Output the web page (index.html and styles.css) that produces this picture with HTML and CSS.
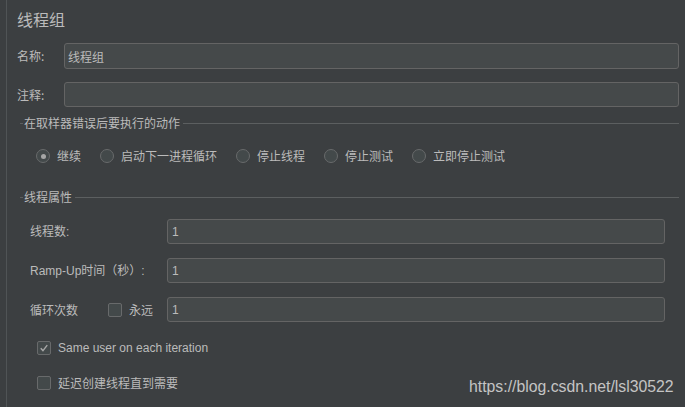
FILE: index.html
```html
<!DOCTYPE html>
<html lang="zh">
<head>
<meta charset="utf-8">
<link rel="stylesheet" href="styles.css">
</head>
<body>
<div class="frame">
  <div class="title">线程组</div>
  <div class="form-row first">
    <label class="label">名称:</label>
    <div class="input">线程组</div>
  </div>
  <div class="form-row second">
    <label class="label">注释:</label>
    <div class="input"></div>
  </div>

  <div class="group-head">
    <span class="seg"></span><span class="legend">在取样器错误后要执行的动作</span><span class="rule"></span>
  </div>
  <div class="radio-row">
    <span class="radio on"></span><span class="rlabel">继续</span>
    <span class="radio"></span><span class="rlabel">启动下一进程循环</span>
    <span class="radio"></span><span class="rlabel">停止线程</span>
    <span class="radio"></span><span class="rlabel">停止测试</span>
    <span class="radio"></span><span class="rlabel">立即停止测试</span>
  </div>

  <div class="group-head g2">
    <span class="seg"></span><span class="legend">线程属性</span><span class="rule"></span>
  </div>
  <div class="prop-row">
    <span class="plabel">线程数:</span>
    <div class="input small">1</div>
  </div>
  <div class="prop-row">
    <span class="plabel">Ramp-Up时间（秒）:</span>
    <div class="input small">1</div>
  </div>
  <div class="prop-row">
    <span class="plabel loop"><span class="loop-text">循环次数</span><span class="check"></span><span class="forever">永远</span></span>
    <div class="input small">1</div>
  </div>
  <div class="check-row">
    <span class="check checked"><svg viewBox="0 0 14 14" width="14" height="14"><path d="M3.2 7.2 L5.8 10 L10.8 3.6" fill="none" stroke="#a8a8a8" stroke-width="1.6"/></svg></span>
    <span class="clabel">Same user on each iteration</span>
  </div>
  <div class="check-row last">
    <span class="check"></span>
    <span class="clabel">延迟创建线程直到需要</span>
  </div>
</div>
<div class="watermark">https://blog.csdn.net/lsl30522</div>
</body>
</html>
```
FILE: styles.css
```css
html, body {
  margin: 0;
  padding: 0;
}
body {
  width: 685px;
  height: 407px;
  overflow: hidden;
  background: #3c3f41;
  color: #bbbbbb;
  font-family: "Liberation Sans", "Noto Sans CJK SC", sans-serif;
  font-size: 12px;
  position: relative;
}
.frame {
  margin-left: 6px;
  border-left: 1px solid #505456;
  height: 407px;
  box-sizing: border-box;
  padding: 0 6px 0 10px;
  display: flex;
  flex-direction: column;
}
.title {
  font-family: "Noto Sans CJK SC", sans-serif;
  font-size: 16px;
  line-height: 20px;
  margin-top: 9px;
  height: 20px;
  color: #bbbbbb;
}
.form-row {
  display: flex;
  align-items: center;
  height: 26px;
}
.form-row.first { margin-top: 14px; }
.form-row.second { margin-top: 13px; height: 25px; }
.label {
  width: 47px;
  flex: none;
  font-family: "Noto Sans CJK SC", sans-serif;
  line-height: 16px;
}
.input {
  flex: 1;
  height: 100%;
  box-sizing: border-box;
  background: #45494a;
  border: 1px solid #646464;
  border-radius: 3px;
  padding-left: 3px;
  display: flex;
  align-items: center;
  font-family: "Noto Sans CJK SC", sans-serif;
  color: #bbbbbb;
}
.group-head {
  display: flex;
  align-items: center;
  height: 16px;
  margin-top: 8px;
  margin-left: 3px;
}
.group-head.g2 { margin-top: 26px; }
.seg {
  width: 3px;
  height: 1px;
  background: #5c5f60;
  flex: none;
}
.legend {
  font-family: "Noto Sans CJK SC", sans-serif;
  padding: 0 3px 0 1px;
  line-height: 16px;
}
.rule {
  flex: 1;
  height: 1px;
  background: #5c5f60;
}
.radio-row {
  display: flex;
  align-items: center;
  height: 14px;
  margin-top: 18px;
  padding-left: 19px;
}
.radio {
  width: 14px;
  height: 14px;
  box-sizing: border-box;
  border: 1px solid #686a6b;
  border-radius: 50%;
  background: #43494a;
  flex: none;
  display: flex;
  align-items: center;
  justify-content: center;
}
.radio.on::after {
  content: "";
  width: 5px;
  height: 5px;
  border-radius: 50%;
  background: #a6a6a6;
}
.rlabel {
  font-family: "Noto Sans CJK SC", sans-serif;
  margin-left: 7px;
  margin-right: 19px;
  line-height: 16px;
}
.prop-row {
  display: flex;
  align-items: center;
  height: 25px;
  margin-top: 14px;
  padding-left: 13px;
  margin-right: 14px;
}
.plabel {
  width: 137px;
  flex: none;
  font-family: "Liberation Sans", "Noto Sans CJK SC", sans-serif;
  line-height: 16px;
  display: flex;
  align-items: center;
}
.input.small { padding-left: 4px; font-family: "Liberation Sans", sans-serif; }
.loop-text { width: 78px; font-family: "Noto Sans CJK SC", sans-serif; }
.forever { margin-left: 7px; font-family: "Noto Sans CJK SC", sans-serif; }
.check {
  width: 14px;
  height: 14px;
  box-sizing: border-box;
  border: 1px solid #686a6b;
  border-radius: 2px;
  background: #43494a;
  flex: none;
  display: flex;
  align-items: center;
  justify-content: center;
}
.check svg { display: block; }
.check-row {
  display: flex;
  align-items: center;
  height: 14px;
  margin-top: 19px;
  padding-left: 20px;
}
.check-row.last { margin-top: 21px; }
.clabel {
  margin-left: 7px;
  line-height: 16px;
  font-family: "Liberation Sans", "Noto Sans CJK SC", sans-serif;
}
.check-row.last .clabel { font-family: "Noto Sans CJK SC", sans-serif; }
.watermark {
  position: absolute;
  left: 469px;
  top: 377px;
  font-family: "Liberation Sans", sans-serif;
  font-size: 15.8px;
  line-height: 20px;
  color: #c4c4c4;
}
```
